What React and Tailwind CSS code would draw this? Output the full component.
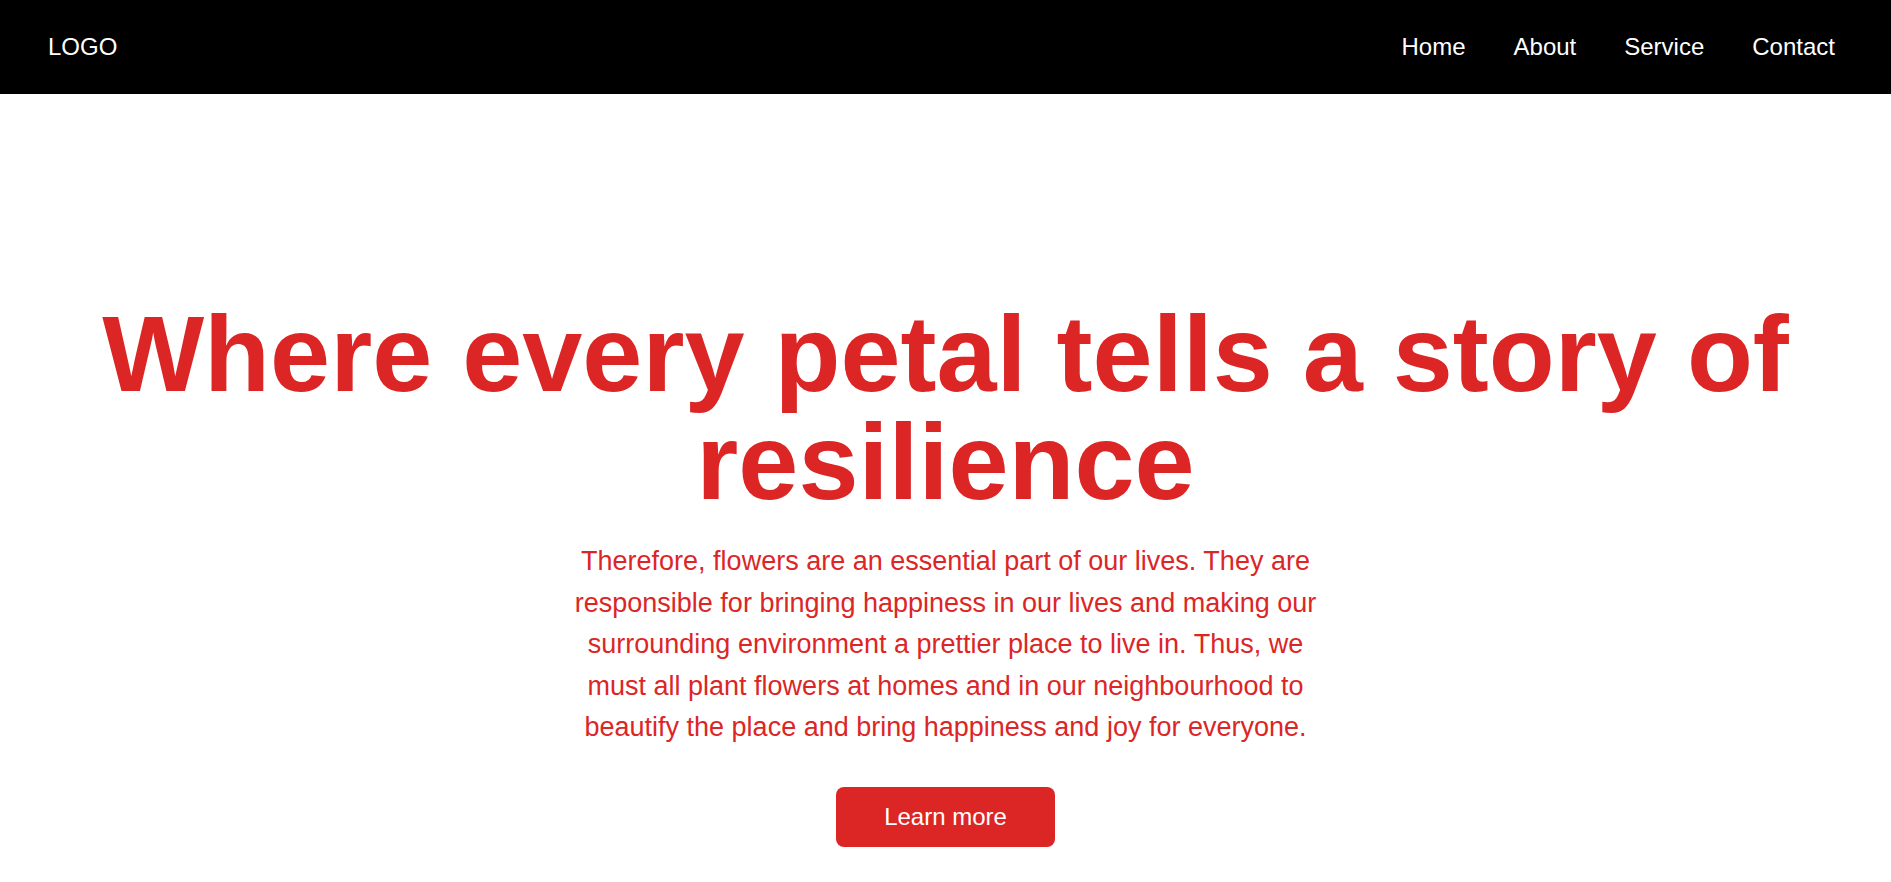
export default function App() {
  return (
    <div className="min-h-screen bg-white" style={{ fontFamily: '"Liberation Sans", Arial, sans-serif' }}>
      <nav className="flex h-[94px] items-center justify-between bg-black pl-12 pr-14 text-white">
        <div className="text-[24px] leading-[28px]">LOGO</div>
        <ul className="flex gap-12 text-[24px] leading-[28px]">
          <li><a href="#">Home</a></li>
          <li><a href="#">About</a></li>
          <li><a href="#">Service</a></li>
          <li><a href="#">Contact</a></li>
        </ul>
      </nav>
      <main className="flex flex-col items-center pt-[206px] text-center text-[#dc2626]">
        <h1 className="text-[108px] font-bold leading-none">
          Where every petal tells a story of
          <br />
          resilience
        </h1>
        <p className="mt-[25px] max-w-[760px] text-[27px] leading-[41.6px]">
          Therefore, flowers are an essential part of our lives. They are responsible for bringing happiness in our lives and making our surrounding environment a prettier place to live in. Thus, we must all plant flowers at homes and in our neighbourhood to beautify the place and bring happiness and joy for everyone.
        </p>
        <button className="mt-[38px] rounded-lg bg-[#dc2626] px-12 py-4 text-[24px] leading-[28px] text-white">
          Learn more
        </button>
      </main>
    </div>
  );
}
